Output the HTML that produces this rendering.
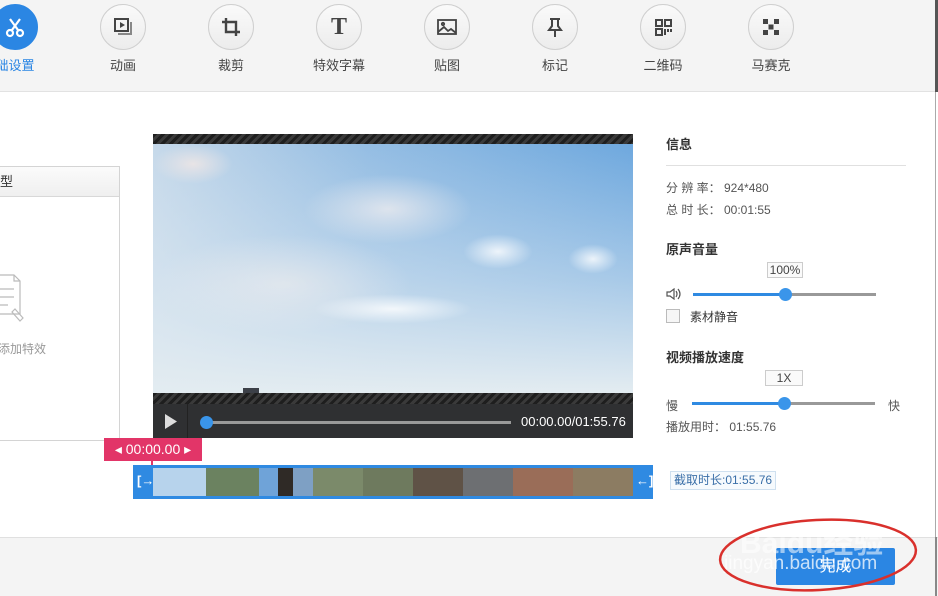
<!DOCTYPE html>
<html><head><meta charset="utf-8"><style>
*{margin:0;padding:0;box-sizing:border-box}
body{width:938px;height:596px;position:relative;overflow:hidden;background:#fff;font-family:"Liberation Sans","Noto Sans CJK SC",sans-serif;font-size:12px;color:#333}
.top{position:absolute;left:0;top:0;width:938px;height:92px;background:#f4f4f4;border-bottom:1px solid #e2e2e2}
.ic{position:absolute;top:4px;width:46px;height:46px;border-radius:50%;background:linear-gradient(#fafafa,#ececec);border:1px solid #cfcfcf;display:flex;align-items:center;justify-content:center}
.lb{position:absolute;top:55px;width:80px;text-align:center;font-size:13px;color:#444}
.abs{position:absolute}
.bot{position:absolute;left:0;top:537px;width:938px;height:59px;background:#f4f4f4;border-top:1px solid #e0e0e0}
.info{position:absolute;left:666px;color:#555}
.h{font-size:13px;font-weight:bold;color:#333}
.stripe{background:repeating-linear-gradient(135deg,#1e1e1e 0 3px,#3a3a3a 3px 6px)}
</style></head><body>
<div class="top">
 <div class="ic" style="left:-8px;background:#2b86e3;border-color:#2b86e3"><svg width="22" height="22" viewBox="0 0 22 22" fill="none" stroke="#fff" stroke-width="2.2"><path d="M6 3l8 11M16 3L8 14"/><circle cx="6" cy="17" r="3"/><circle cx="16" cy="17" r="3"/></svg></div>
 <div class="lb" style="left:-25px;color:#2b86e3">础设置</div>
 <div class="ic" style="left:100px"><svg width="22" height="22" viewBox="0 0 22 22" fill="none" stroke="#444" stroke-width="2"><rect x="3" y="3" width="13" height="12"/><path d="M19 6v12H6" stroke="#888"/><path d="M8 6l5 3-5 3z" fill="#444" stroke="none"/></svg></div>
 <div class="lb" style="left:83px">动画</div>
 <div class="ic" style="left:208px"><svg width="22" height="22" viewBox="0 0 22 22" fill="none" stroke="#444" stroke-width="2.4"><path d="M6 2v14h14M2 6h14v14"/></svg></div>
 <div class="lb" style="left:191px">裁剪</div>
 <div class="ic" style="left:316px"><span style="font:bold 24px 'Liberation Serif',serif;color:#444">T</span></div>
 <div class="lb" style="left:299px">特效字幕</div>
 <div class="ic" style="left:424px"><svg width="22" height="22" viewBox="0 0 22 22" fill="none" stroke="#444" stroke-width="1.8"><rect x="2" y="4" width="18" height="14"/><path d="M2 16l6-5 4 4 3-2 5 4"/><circle cx="7" cy="8" r="1.2"/></svg></div>
 <div class="lb" style="left:407px">贴图</div>
 <div class="ic" style="left:532px"><svg width="22" height="22" viewBox="0 0 22 22" fill="none" stroke="#444" stroke-width="2"><path d="M6 3h10M8 3v7l-3 4h12l-3-4V3M11 14v7"/></svg></div>
 <div class="lb" style="left:515px">标记</div>
 <div class="ic" style="left:640px"><svg width="22" height="22" viewBox="0 0 22 22" fill="none" stroke="#444" stroke-width="2"><rect x="4" y="4" width="6" height="6"/><rect x="13" y="4" width="6" height="6"/><rect x="4" y="13" width="6" height="6"/><path d="M13 13v6M16 13v3M19 13v3"/></svg></div>
 <div class="lb" style="left:623px">二维码</div>
 <div class="ic" style="left:748px"><svg width="22" height="22" viewBox="0 0 22 22" fill="#444"><rect x="3" y="3" width="5" height="5"/><rect x="14" y="3" width="5" height="5"/><rect x="8.5" y="8.5" width="5" height="5"/><rect x="3" y="14" width="5" height="5"/><rect x="14" y="14" width="5" height="5"/></svg></div>
 <div class="lb" style="left:731px">马赛克</div>
</div>

<div class="abs" style="left:-1px;top:166px;width:121px;height:275px;border:1px solid #d4d4d4;background:#fff">
 <div style="height:30px;background:linear-gradient(#fbfbfb,#efefef);border-bottom:1px solid #d8d8d8;font-size:13px;line-height:29px">型</div>
 <svg class="abs" style="left:0;top:106px" width="30" height="56" viewBox="0 0 30 56" fill="none" stroke="#bbb" stroke-width="1.2"><path d="M-5 2h19l6 6v33H-5"/><path d="M14 2v6h6M0 16h14M0 24h14M0 32h8"/><path d="M15 36l8 9-3 3-8-9z"/></svg>
 <div class="abs" style="left:-2px;top:173px;color:#999;font-size:12px">添加特效</div>
</div>

<div class="abs stripe" style="left:153px;top:134px;width:480px;height:10px"></div>
<div class="abs" style="left:153px;top:144px;width:480px;height:249px;overflow:hidden;background:linear-gradient(180deg,rgba(255,255,255,0) 0%,rgba(225,235,242,.5) 55%,#e3ecf1 100%),linear-gradient(90deg,#c6d9ea 0%,#94bde3 45%,#6ea8de 100%)">
 <div class="abs" style="left:0;top:0;width:80px;height:40px;background:radial-gradient(#e8e4e6,transparent 70%)"></div>
 <div class="abs" style="left:150px;top:30px;width:170px;height:70px;background:radial-gradient(rgba(245,240,240,.7),transparent 70%)"></div>
 <div class="abs" style="left:0;top:90px;width:260px;height:100px;background:radial-gradient(rgba(240,238,238,.6),transparent 70%)"></div>
 <div class="abs" style="left:310px;top:90px;width:70px;height:35px;background:radial-gradient(rgba(255,255,255,.8),transparent 70%)"></div>
 <div class="abs" style="left:415px;top:100px;width:50px;height:30px;background:radial-gradient(rgba(255,255,255,.8),transparent 70%)"></div>
 <div class="abs" style="left:160px;top:150px;width:160px;height:30px;background:radial-gradient(rgba(255,255,255,.8),transparent 70%)"></div>
 <div class="abs" style="left:90px;top:244px;width:16px;height:5px;background:#3c4048"></div>
</div>
<div class="abs stripe" style="left:153px;top:393px;width:480px;height:11px"></div>
<div class="abs" style="left:153px;top:404px;width:480px;height:34px;background:#2f3032">
 <svg class="abs" style="left:12px;top:10px" width="12" height="15"><path d="M0 0l12 7.5L0 15z" fill="#ddd"/></svg>
 <div class="abs" style="left:34px;top:0;width:1px;height:34px;background:#222"></div>
 <div class="abs" style="left:50px;top:17px;width:308px;height:3px;background:#999"></div>
 <div class="abs" style="left:47px;top:12px;width:13px;height:13px;border-radius:50%;background:#3a95ea"></div>
 <div class="abs" style="left:368px;top:10px;color:#fff;font-size:13px">00:00.00/01:55.76</div>
</div>

<div class="abs" style="left:104px;top:438px;width:98px;height:23px;background:#e23568;color:#fff;font-size:14px;line-height:23px;text-align:center">◂ 00:00.00 ▸</div>
<div class="abs" style="left:151px;top:461px;width:2px;height:38px;background:#e23568"></div>
<div class="abs" style="left:133px;top:465px;width:520px;height:34px;background:#2f8ae2">
 <div class="abs" style="left:20px;top:3px;width:480px;height:28px;background:linear-gradient(90deg,#b7d3ec 0 53px,#6b8260 53px 106px,#6fa3d8 106px 125px,#2f2a26 125px 140px,#7ea0c4 140px 160px,#7b8a6a 160px 210px,#6e7a5e 210px 260px,#5f5246 260px 310px,#6d6f72 310px 360px,#9a6d58 360px 420px,#8c7c62 420px 480px)"></div>
 <div class="abs" style="left:4px;top:8px;color:#fff;font-weight:bold;font-size:13px">[→</div>
 <div class="abs" style="left:503px;top:8px;color:#fff;font-weight:bold;font-size:13px">←]</div>
</div>
<div class="abs" style="left:670px;top:471px;height:19px;padding:0 3px;border:1px solid #cfe0ef;background:#f6fafd;color:#3a6fa8;font-size:12px;line-height:17px">截取时长:01:55.76</div>

<div class="info h" style="top:134px">信息</div>
<div class="abs" style="left:666px;top:165px;width:240px;height:1px;background:#e0e0e0"></div>
<div class="info" style="top:179px">分 辨 率： 924*480</div>
<div class="info" style="top:201px">总 时 长： 00:01:55</div>
<div class="info h" style="top:239px">原声音量</div>
<div class="abs" style="left:767px;top:262px;width:36px;height:16px;border:1px solid #ccc;background:#fafafa;font-size:12px;text-align:center;line-height:14px;color:#444">100%</div>
<svg class="abs" style="left:666px;top:288px" width="16" height="12" fill="none" stroke="#555" stroke-width="1.2"><path d="M1 4h3l4-3v10l-4-3H1z"/><path d="M10 3q2 3 0 6M12 1q4 5 0 10"/></svg>
<div class="abs" style="left:693px;top:293px;width:92px;height:3px;background:#2f8ae2"></div>
<div class="abs" style="left:785px;top:293px;width:91px;height:3px;background:#999"></div>
<div class="abs" style="left:779px;top:288px;width:13px;height:13px;border-radius:50%;background:#3a95ea"></div>
<div class="abs" style="left:666px;top:309px;width:14px;height:14px;border:1px solid #bbb;background:#f6f6f6"></div>
<div class="info" style="left:690px;top:308px;color:#333">素材静音</div>
<div class="info h" style="top:347px">视频播放速度</div>
<div class="abs" style="left:765px;top:370px;width:38px;height:16px;border:1px solid #ccc;background:#fafafa;font-size:12px;text-align:center;line-height:14px;color:#444">1X</div>
<div class="info" style="top:397px">慢</div>
<div class="abs" style="left:692px;top:402px;width:92px;height:3px;background:#2f8ae2"></div>
<div class="abs" style="left:784px;top:402px;width:91px;height:3px;background:#999"></div>
<div class="abs" style="left:778px;top:397px;width:13px;height:13px;border-radius:50%;background:#3a95ea"></div>
<div class="info" style="left:888px;top:397px">快</div>
<div class="info" style="top:418px">播放用时： 01:55.76</div>

<div class="bot"></div>
<div class="abs" style="left:935px;top:0;width:1px;height:596px;background:#aaa"></div>
<div class="abs" style="left:935px;top:0;width:3px;height:92px;background:#555"></div>
<div class="abs" style="left:935px;top:537px;width:2px;height:59px;background:#888"></div>
<div class="abs" style="left:776px;top:548px;width:119px;height:37px;background:#2b86e3;border-radius:2px;color:#fff;font-size:16px;text-align:center;line-height:37px">完成</div>
<div class="abs" style="left:740px;top:518px;font-size:30px;font-weight:bold;color:rgba(255,255,255,.55)">Baidu经验</div>
<div class="abs" style="left:724px;top:553px;font-size:19px;color:rgba(255,255,255,.75)">jingyan.baidu.com</div>
<svg class="abs" style="left:715px;top:515px" width="210" height="80"><ellipse cx="103" cy="40" rx="98" ry="35" fill="none" stroke="#d9302c" stroke-width="2.5" transform="rotate(-3 103 40)"/></svg>
</body></html>
